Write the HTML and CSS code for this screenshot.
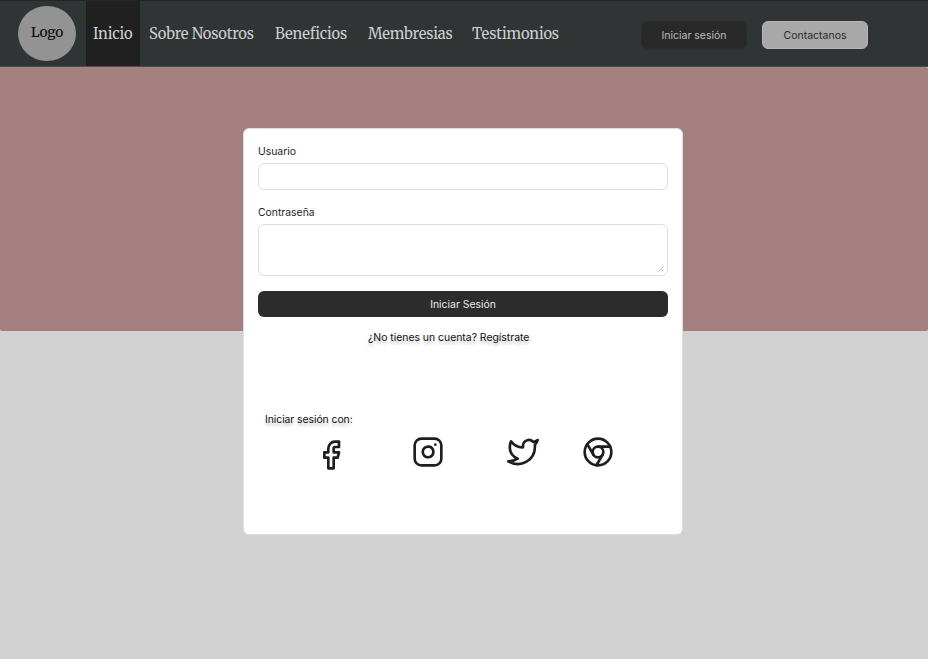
FILE: index.html
```html
<!DOCTYPE html>
<html lang="es">
<head>
<meta charset="utf-8">
<title>Iniciar sesión</title>
<link rel="stylesheet" href="styles.css">
</head>
<body>
<header class="topbar">
  <div class="logo"><span>Logo</span></div>
  <nav class="nav">
    <a class="active">Inicio</a>
    <a>Sobre Nosotros</a>
    <a>Beneficios</a>
    <a>Membresias</a>
    <a>Testimonios</a>
  </nav>
  <div class="actions">
    <button class="btn dark">Iniciar sesión</button>
    <button class="btn light">Contactanos</button>
  </div>
</header>
<div class="hero"></div>
<main class="overlay">
  <form class="card">
    <label for="user">Usuario</label>
    <input id="user" type="text">
    <label for="pass">Contraseña</label>
    <div class="area" id="pass">
      <svg class="grip" viewBox="0 0 6 6"><path d="M.5 5.5 5.5.5M3.5 5.5l2-2"/></svg>
    </div>
    <button class="submit" type="button">Iniciar Sesión</button>
    <p class="register">¿No tienes un cuenta? Regístrate</p>
    <p class="with">Iniciar sesión con:</p>
    <div class="social">
      <svg class="fb" viewBox="0 0 24 24"><path d="M18 2h-3a5 5 0 0 0-5 5v3H7v4h3v8h4v-8h3l1-4h-4V7a1 1 0 0 1 1-1h3z"/></svg>
      <svg viewBox="0 0 24 24"><rect x="2" y="2" width="20" height="20" rx="5"/><path d="M16 11.37A4 4 0 1 1 12.63 8 4 4 0 0 1 16 11.37zM17.5 6.5h.01"/></svg>
      <svg viewBox="0 0 24 24"><path d="M23 3a10.9 10.9 0 0 1-3.14 1.53 4.48 4.48 0 0 0-7.86 3v1A10.66 10.66 0 0 1 3 4s-4 9 5 13a11.64 11.64 0 0 1-7 2c9 5 20 0 20-11.5a4.5 4.5 0 0 0-.08-.83A7.72 7.72 0 0 0 23 3z"/></svg>
      <svg viewBox="0 0 24 24"><circle cx="12" cy="12" r="10"/><circle cx="12" cy="12" r="4"/><path d="M21.17 8H12M3.95 6.06 8.54 14M10.88 21.94 15.46 14"/></svg>
    </div>
  </form>
</main>
</body>
</html>
```
FILE: styles.css
```css
* { box-sizing: border-box; }
body {
  margin: 0;
  height: 659px;
  overflow: hidden;
  background: #d2d2d2;
  font-family: Inter, "Liberation Sans", sans-serif;
  color: #1e1e1e;
}
.topbar {
  display: flex;
  height: 67px;
  background: #303435;
  border-top: 1px solid #222627;
  border-bottom: 1px solid #554b4d;
}
.logo {
  flex: none;
  width: 58px;
  height: 55px;
  margin: 5px 10px 0 18px;
  border-radius: 50%;
  background: #939393;
  color: #0c0c0c;
  text-align: center;
  font: 13.8px/52px Merriweather, "DejaVu Serif Condensed", "DejaVu Serif", serif;
  font-stretch: condensed;
  letter-spacing: -.3px;
}
.nav {
  display: grid;
  grid-template-columns: 54px 126px 93px 104px 100px;
  height: 65px;
  font: 14.7px/67px Merriweather, "DejaVu Serif Condensed", "DejaVu Serif", serif;
  font-stretch: condensed;
  letter-spacing: -.16px;
  color: #cdcdcd;
  white-space: nowrap;
}
.nav a { height: 65px; padding-left: 9px; }
.nav .active { background: #202020; padding-left: 7px; }
.actions { display: flex; gap: 15px; margin: 20px 0 0 78px; }
.btn {
  width: 106px;
  height: 28px;
  padding: 0;
  border-radius: 6px;
  font: 10.5px/27px Inter, sans-serif;
}
.dark { background: #292929; border: 1px solid #2c2e2e; color: #bcbcbc; }
.light { background: #a8a8a8; border: 1px solid #b4b4b4; color: #292929; }
.hero { height: 264px; background: #a48080; border-radius: 0 2px 2px 2px; }
.overlay { position: absolute; left: 243px; top: 128px; }
.card {
  display: flex;
  flex-direction: column;
  width: 440px;
  height: 407px;
  padding: 15px 14px 0 14px;
  background: #fff;
  border: 1px solid #dedede;
  border-radius: 6px;
  font-size: 10.4px;
}
label { line-height: 15px; }
input, .area {
  border: 1px solid #dedede;
  border-radius: 6px;
  background: #fff;
}
input { width: 100%; height: 27px; margin: 4px 0 15px; padding: 0 10px; }
.area {
  display: flex;
  align-items: flex-end;
  justify-content: flex-end;
  height: 52.4px;
  margin: 4px 0 15px;
  padding: 3px;
}
.grip { width: 6px; height: 6px; stroke: #a0a0a0; stroke-width: .8; fill: none; }
.submit {
  height: 26px;
  padding: 1px 0 0;
  border: 0;
  border-radius: 6px;
  background: #2c2c2c;
  color: #e8e8e8;
  font: 10.4px/25px Inter, sans-serif;
}
p { margin: 0; line-height: 15px; color: #111; text-shadow: 0 3px 3px rgba(0,0,0,.25); }
.register { margin: 12.6px 0 0 110px; }
.with { margin: 67px 0 0 7px; letter-spacing: -.06px; }
.social {
  display: grid;
  grid-template-columns: 97px 95px 74.5px 32px;
  margin: 8.6px 0 0 57.3px;
}
.social svg {
  width: 32px;
  height: 32px;
  fill: none;
  stroke: #1e1e1e;
  stroke-width: 2;
  stroke-linecap: round;
  stroke-linejoin: round;
}
.social .fb { margin-top: 3px; }
```
